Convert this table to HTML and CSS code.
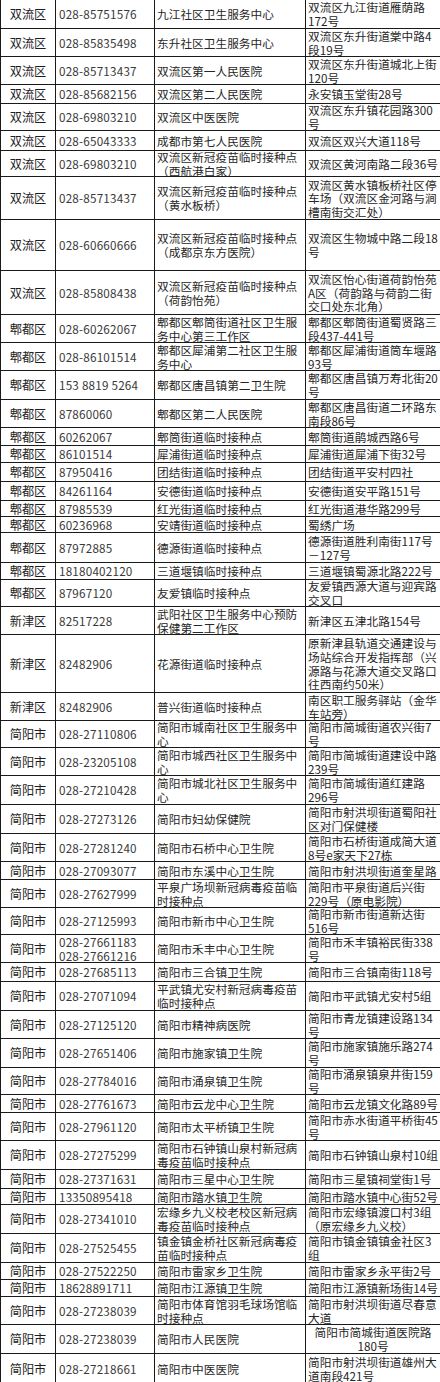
FILE: index.html
```html
<!DOCTYPE html>
<html lang="zh-CN">
<head>
<meta charset="utf-8">
<title>接种点列表</title>
<link rel="stylesheet" href="styles.css">
</head>
<body>
<table class="sheet">
<colgroup><col class="w1"><col class="w2"><col class="w3"><col class="w4"></colgroup>
<tbody>
<tr class="h29"><td class="d">双流区</td><td class="p">028-85751576</td><td>九江社区卫生服务中心</td><td><div class="ml">双流区九江街道雁荫路<br>172号</div></td></tr>
<tr class="h28"><td class="d">双流区</td><td class="p">028-85835498</td><td>东升社区卫生服务中心</td><td><div class="ml">双流区东升街道棠中路4<br>段19号</div></td></tr>
<tr class="h28"><td class="d">双流区</td><td class="p">028-85713437</td><td>双流区第一人民医院</td><td><div class="ml">双流区东升街道城北上街<br>120号</div></td></tr>
<tr class="h19"><td class="d">双流区</td><td class="p">028-85682156</td><td>双流区第二人民医院</td><td>永安镇玉堂街28号</td></tr>
<tr class="h27"><td class="d">双流区</td><td class="p">028-69803210</td><td>双流区中医医院</td><td><div class="ml">双流区东升镇花园路300<br>号</div></td></tr>
<tr class="h20"><td class="d">双流区</td><td class="p">028-65043333</td><td>成都市第七人民医院</td><td>双流区双兴大道118号</td></tr>
<tr class="h26"><td class="d">双流区</td><td class="p">028-69803210</td><td><div class="ml">双流区新冠疫苗临时接种点<br>（西航港白家）</div></td><td>双流区黄河南路二段36号</td></tr>
<tr class="h43"><td class="d">双流区</td><td class="p">028-85713437</td><td><div class="ml">双流区新冠疫苗临时接种点<br>（黄水板桥）</div></td><td><div class="ml">双流区黄水镇板桥社区停<br>车场（双流区金河路与涧<br>槽南街交汇处）</div></td></tr>
<tr class="h51"><td class="d">双流区</td><td class="p">028-60660666</td><td><div class="ml">双流区新冠疫苗临时接种点<br>（成都京东方医院）</div></td><td><div class="ml">双流区生物城中路二段18<br>号</div></td></tr>
<tr class="h44"><td class="d">双流区</td><td class="p">028-85808438</td><td><div class="ml">双流区新冠疫苗临时接种点<br>（荷韵怡苑）</div></td><td><div class="ml">双流区怡心街道荷韵怡苑<br>A区（荷韵路与荷韵二街<br>交口处东北角）</div></td></tr>
<tr class="h28"><td class="d">郫都区</td><td class="p">028-60262067</td><td><div class="ml">郫都区郫筒街道社区卫生服<br>务中心第三工作区</div></td><td><div class="ml">郫都区郫筒街道蜀贤路三<br>段437-441号</div></td></tr>
<tr class="h28"><td class="d">郫都区</td><td class="p">028-86101514</td><td><div class="ml">郫都区犀浦第二社区卫生服<br>务中心</div></td><td><div class="ml">郫都区犀浦街道筒车堰路<br>93号</div></td></tr>
<tr class="h29"><td class="d">郫都区</td><td class="p">153 8819 5264</td><td>郫都区唐昌镇第二卫生院</td><td><div class="ml">郫都区唐昌镇万寿北街20<br>号</div></td></tr>
<tr class="h28"><td class="d">郫都区</td><td class="p">87860060</td><td>郫都区第二人民医院</td><td><div class="ml">郫都区唐昌街道二环路东<br>南段86号</div></td></tr>
<tr class="h18"><td class="d">郫都区</td><td class="p">60262067</td><td>郫筒街道临时接种点</td><td>郫筒街道鹃城西路6号</td></tr>
<tr class="h17"><td class="d">郫都区</td><td class="p">86101514</td><td>犀浦街道临时接种点</td><td>犀浦街道犀浦下街32号</td></tr>
<tr class="h19"><td class="d">郫都区</td><td class="p">87950416</td><td>团结街道临时接种点</td><td>团结街道平安村四社</td></tr>
<tr class="h19"><td class="d">郫都区</td><td class="p">84261164</td><td>安德街道临时接种点</td><td>安德街道安平路151号</td></tr>
<tr class="h16"><td class="d">郫都区</td><td class="p">87985539</td><td>红光街道临时接种点</td><td>红光街道港华路299号</td></tr>
<tr class="h16"><td class="d">郫都区</td><td class="p">60236968</td><td>安靖街道临时接种点</td><td>蜀绣广场</td></tr>
<tr class="h30"><td class="d">郫都区</td><td class="p">87972885</td><td>德源街道临时接种点</td><td><div class="ml">德源街道胜利南街117号<br>－127号</div></td></tr>
<tr class="h17"><td class="d">郫都区</td><td class="p">18180402120</td><td>三道堰镇临时接种点</td><td>三道堰镇蜀源北路222号</td></tr>
<tr class="h27"><td class="d">郫都区</td><td class="p">87967120</td><td>友爱镇临时接种点</td><td><div class="ml">友爱镇西源大道与迎宾路<br>交叉口</div></td></tr>
<tr class="h28"><td class="d">新津区</td><td class="p">82517228</td><td><div class="ml">武阳社区卫生服务中心预防<br>保健第二工作区</div></td><td>新津区五津北路154号</td></tr>
<tr class="h58"><td class="d">新津区</td><td class="p">82482906</td><td>花源街道临时接种点</td><td><div class="ml">原新津县轨道交通建设与<br>场站综合开发指挥部（兴<br>源路与花源大道交叉路口<br>往西南约50米）</div></td></tr>
<tr class="h28"><td class="d">新津区</td><td class="p">82482906</td><td>普兴街道临时接种点</td><td><div class="ml">南区职工服务驿站（金华<br>车站旁）</div></td></tr>
<tr class="h27"><td class="d">简阳市</td><td class="p">028-27110806</td><td><div class="ml">简阳市城南社区卫生服务中<br>心</div></td><td><div class="ml">简阳市简城街道农兴街7<br>号</div></td></tr>
<tr class="h28"><td class="d">简阳市</td><td class="p">028-23205108</td><td><div class="ml">简阳市城西社区卫生服务中<br>心</div></td><td><div class="ml">简阳市简城街道建设中路<br>239号</div></td></tr>
<tr class="h29"><td class="d">简阳市</td><td class="p">028-27210428</td><td><div class="ml">简阳市城北社区卫生服务中<br>心</div></td><td><div class="ml">简阳市简城街道红建路<br>296号</div></td></tr>
<tr class="h29"><td class="d">简阳市</td><td class="p">028-27273126</td><td>简阳市妇幼保健院</td><td><div class="ml">简阳市射洪坝街道蜀阳社<br>区对门保健楼</div></td></tr>
<tr class="h28"><td class="d">简阳市</td><td class="p">028-27281240</td><td>简阳市石桥中心卫生院</td><td><div class="ml">简阳市石桥街道成简大道<br>8号e家天下27栋</div></td></tr>
<tr class="h18"><td class="d">简阳市</td><td class="p">028-27093077</td><td>简阳市东溪中心卫生院</td><td>简阳市射洪坝街道奎星路</td></tr>
<tr class="h28"><td class="d">简阳市</td><td class="p">028-27627999</td><td><div class="ml">平泉广场坝新冠病毒疫苗临<br>时接种点</div></td><td><div class="ml">简阳市平泉街道后兴街<br>229号（原电影院）</div></td></tr>
<tr class="h27"><td class="d">简阳市</td><td class="p">028-27125993</td><td>简阳市新市中心卫生院</td><td><div class="ml">简阳市新市街道新达街<br>516号</div></td></tr>
<tr class="h28"><td class="d">简阳市</td><td class="p"><div class="ml">028-27661183<br>028-27661216</div></td><td>简阳市禾丰中心卫生院</td><td><div class="ml">简阳市禾丰镇裕民街338<br>号</div></td></tr>
<tr class="h19"><td class="d">简阳市</td><td class="p">028-27685113</td><td>简阳市三合镇卫生院</td><td>简阳市三合镇南街118号</td></tr>
<tr class="h29"><td class="d">简阳市</td><td class="p">028-27071094</td><td><div class="ml">平武镇尤安村新冠病毒疫苗<br>临时接种点</div></td><td>简阳市平武镇尤安村5组</td></tr>
<tr class="h28"><td class="d">简阳市</td><td class="p">028-27125120</td><td>简阳市精神病医院</td><td><div class="ml">简阳市青龙镇建设路134<br>号</div></td></tr>
<tr class="h29"><td class="d">简阳市</td><td class="p">028-27651406</td><td>简阳市施家镇卫生院</td><td><div class="ml">简阳市施家镇施乐路274<br>号</div></td></tr>
<tr class="h27"><td class="d">简阳市</td><td class="p">028-27784016</td><td>简阳市涌泉镇卫生院</td><td><div class="ml">简阳市涌泉镇泉井街159<br>号</div></td></tr>
<tr class="h18"><td class="d">简阳市</td><td class="p">028-27761673</td><td>简阳市云龙中心卫生院</td><td>简阳市云龙镇文化路89号</td></tr>
<tr class="h28"><td class="d">简阳市</td><td class="p">028-27961120</td><td>简阳市太平桥镇卫生院</td><td><div class="ml">简阳市赤水街道平桥街45<br>号</div></td></tr>
<tr class="h29"><td class="d">简阳市</td><td class="p">028-27275299</td><td><div class="ml">简阳市石钟镇山泉村新冠病<br>毒疫苗临时接种点</div></td><td>简阳市石钟镇山泉村10组</td></tr>
<tr class="h19"><td class="d">简阳市</td><td class="p">028-27371631</td><td>简阳市三星中心卫生院</td><td>简阳市三星镇祠堂街1号</td></tr>
<tr class="h16"><td class="d">简阳市</td><td class="p">13350895418</td><td>简阳市踏水镇卫生院</td><td>简阳市踏水镇中心街52号</td></tr>
<tr class="h29"><td class="d">简阳市</td><td class="p">028-27341010</td><td><div class="ml">宏缘乡九义校老校区新冠病<br>毒疫苗临时接种点</div></td><td><div class="ml">简阳市宏缘镇渡口村3组<br>（原宏缘乡九义校）</div></td></tr>
<tr class="h29"><td class="d">简阳市</td><td class="p">028-27525455</td><td><div class="ml">镇金镇金桥社区新冠病毒疫<br>苗临时接种点</div></td><td><div class="ml">简阳市镇金镇镇金社区3<br>组</div></td></tr>
<tr class="h17"><td class="d">简阳市</td><td class="p">028-27522250</td><td>简阳市雷家乡卫生院</td><td>简阳市雷家乡永平街2号</td></tr>
<tr class="h17"><td class="d">简阳市</td><td class="p">18628891711</td><td>简阳市江源镇卫生院</td><td>简阳市江源镇新场街14号</td></tr>
<tr class="h28"><td class="d">简阳市</td><td class="p">028-27238039</td><td><div class="ml">简阳市体育馆羽毛球场馆临<br>时接种点</div></td><td><div class="ml">简阳市射洪坝街道尽春意<br>大道</div></td></tr>
<tr class="h29"><td class="d">简阳市</td><td class="p">028-27238039</td><td>简阳市人民医院</td><td class="c"><div class="ml">简阳市简城街道医院路<br>180号</div></td></tr>
<tr class="h30"><td class="d">简阳市</td><td class="p">028-27218661</td><td>简阳市中医医院</td><td><div class="ml">简阳市射洪坝街道雄州大<br>道南段421号</div></td></tr>
</tbody>
</table>
</body>
</html>
```

FILE: styles.css
```css
html, body {
  margin: 0;
  padding: 0;
  background: #ffffff;
}

body {
  width: 440px;
  overflow: hidden;
}

.sheet {
  border-collapse: collapse;
  table-layout: fixed;
  width: 440px;
  margin-top: -1px;
  font-family: "Noto Sans CJK SC", "Noto Sans", sans-serif;
  font-size: 11.7px;
  line-height: 14px;
  color: #262626;
}

.w1 { width: 55px; }
.w2 { width: 99px; }
.w3 { width: 151px; }
.w4 { width: 135px; }

.sheet td {
  border: 1px solid #1a1a1a;
  padding: 0 0 0 2px;
  vertical-align: middle;
  white-space: nowrap;
  text-align: left;
}

/* multi-line cell: text may spill to the cell's grid lines, as in a spreadsheet */
.ml {
  margin: -2px 0;
  line-height: 13.6px;
}

.sheet td.d {
  text-align: center;
  padding: 0;
  font-size: 12.2px;
  color: #1e1e1e;
}

.sheet td.p {
  padding-left: 3px;
  color: #3a3a3a;
  letter-spacing: 0.2px;
}

.sheet td.c {
  text-align: center;
  padding: 0;
}

.h16 { height: 16px; }
.h17 { height: 17px; }
.h18 { height: 18px; }
.h19 { height: 19px; }
.h20 { height: 20px; }
.h26 { height: 26px; }
.h27 { height: 27px; }
.h28 { height: 28px; }
.h29 { height: 29px; }
.h30 { height: 30px; }
.h43 { height: 43px; }
.h44 { height: 44px; }
.h51 { height: 51px; }
.h58 { height: 58px; }
```
